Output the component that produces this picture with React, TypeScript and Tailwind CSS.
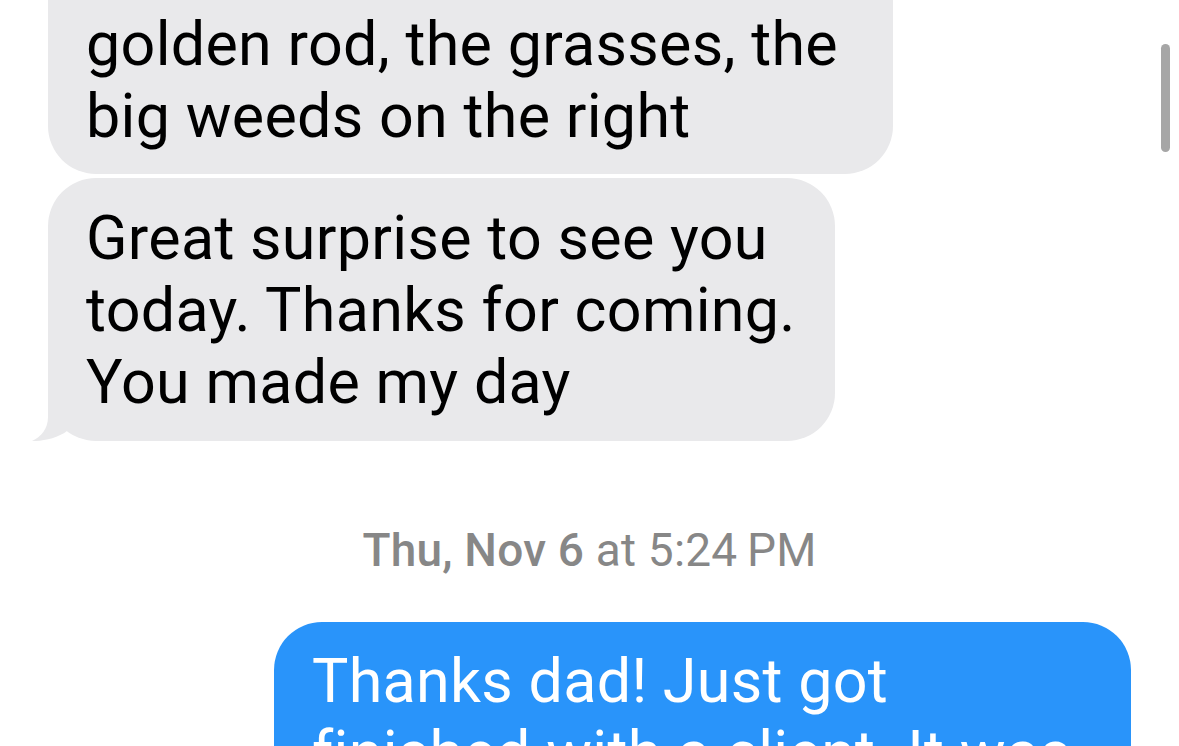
import React from "react";

const Tail = () => (
  <svg
    className="absolute left-[-20px] bottom-0"
    width="60"
    height="52"
    viewBox="0 0 60 52"
  >
    <path
      d="M20 4 L20 28 C20 40 13 48 4 52 C14 52.5 30 49 39 42 L55 30 L55 4 Z"
      fill="#e9e9eb"
    />
  </svg>
);

export default function App() {
  const font = { fontFamily: "Roboto, 'Noto Sans', sans-serif" };
  return (
    <div
      className="relative w-[1179px] h-[746px] overflow-hidden bg-white text-black"
      style={font}
    >
      <div className="-mt-[60px] flex flex-col">
        <div className="ml-[48px] w-[845px] rounded-[48px] bg-[#e9e9eb] pl-[38px] pt-[68px] pb-[22px] text-[61px] leading-[72px] tracking-[0.3px] whitespace-nowrap">
          <div>golden rod, the grasses, the</div>
          <div>big weeds on the right</div>
        </div>
        <div className="relative mt-[4px] ml-[48px] w-[787px] rounded-[48px] bg-[#e9e9eb] pl-[38px] pt-[24px] pb-[23px] text-[61px] leading-[72px] tracking-[0.3px] whitespace-nowrap">
          <div>Great surprise to see you</div>
          <div>today. Thanks for coming.</div>
          <div>You made my day</div>
          <Tail />
        </div>
        <div className="mt-[82px] text-center text-[46px] leading-[54px] tracking-[0.2px] text-[#878787] whitespace-nowrap">
          <span className="font-medium">Thu, Nov 6</span> at 5:24&#8201;PM
        </div>
        <div className="mt-[45px] ml-[274px] w-[857px] rounded-[48px] bg-[#2994fa] pl-[38px] pt-[23px] pb-[23px] text-[61px] leading-[72px] tracking-[0.3px] text-white whitespace-nowrap">
          <div>Thanks dad! Just got</div>
          <div>finished with a client. It was</div>
          <div>&nbsp;</div>
        </div>
      </div>
      <div className="absolute left-[1161px] top-[44px] h-[108px] w-[9px] rounded-full bg-[#a6a6a6]" />
    </div>
  );
}
